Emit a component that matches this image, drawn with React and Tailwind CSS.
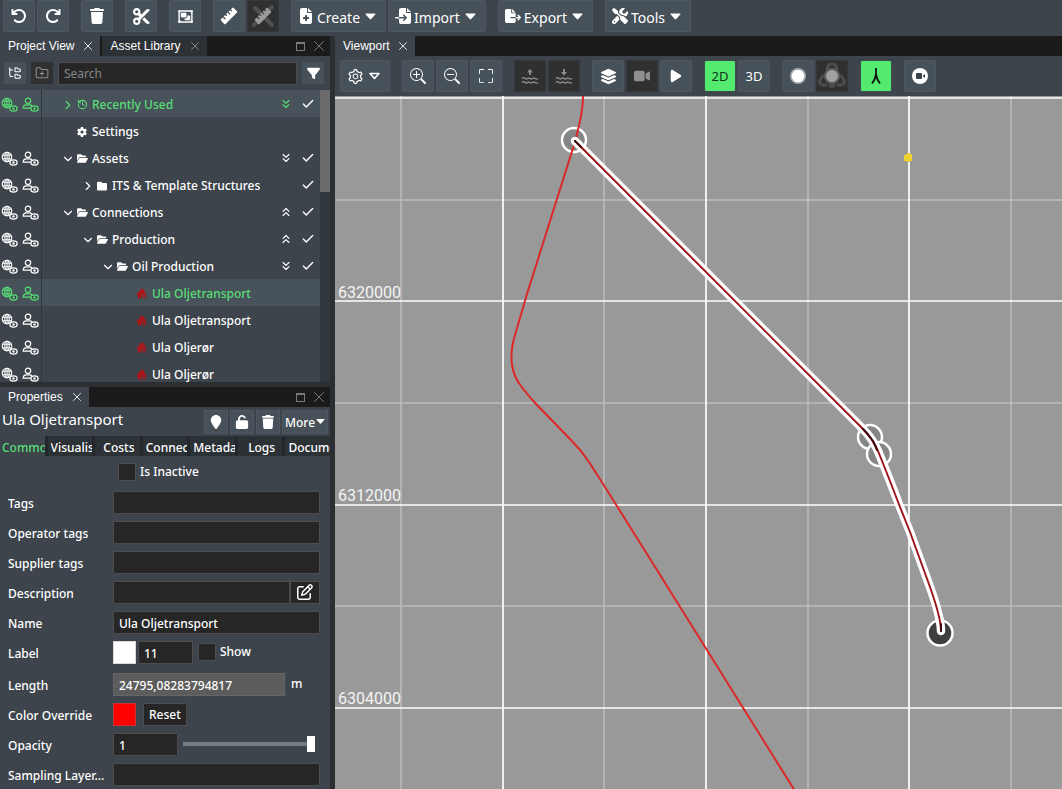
import { useState } from "react";
import clsx from "clsx";
import { Check, ChevronDown, ChevronRight, ChevronsDown, ChevronsUp, FolderTree, FolderPlus, History, X } from "lucide-react";
import {
  FaArrowRotateLeft,
  FaArrowRotateRight,
  FaFileExport,
  FaFileImport,
  FaFileMedical,
  FaFilter,
  FaFolder,
  FaFolderOpen,
  FaGear,
  FaLayerGroup,
  FaLocationPin,
  FaPlay,
  FaRegObjectGroup,
  FaRegPenToSquare,
  FaScissors,
  FaScrewdriverWrench,
  FaTrash,
  FaUnlock,
  FaVideo,
} from "react-icons/fa6";
import { AiOutlineSetting } from "react-icons/ai";
import { BsFullscreen, BsZoomIn, BsZoomOut } from "react-icons/bs";

const treeRows = [
  { label: "Recently Used", depth: 0, chevron: "right", icon: "history", expand: "down", check: true, active: true },
  { label: "Settings", depth: 0, icon: "gear", hideVisibility: true },
  { label: "Assets", depth: 0, chevron: "down", icon: "open", expand: "down", check: true },
  { label: "ITS & Template Structures", depth: 1, chevron: "right", icon: "folder", check: true },
  { label: "Connections", depth: 0, chevron: "down", icon: "open", expand: "up", check: true },
  { label: "Production", depth: 1, chevron: "down", icon: "open", expand: "up", check: true },
  { label: "Oil Production", depth: 2, chevron: "down", icon: "open", expand: "down", check: true },
  { label: "Ula Oljetransport", depth: 3, icon: "pipe", active: true },
  { label: "Ula Oljetransport", depth: 3, icon: "pipe" },
  { label: "Ula Oljerør", depth: 3, icon: "pipe" },
  { label: "Ula Oljerør", depth: 3, icon: "pipe" },
];

const depthPadding = ["pl-[18px]", "pl-[38px]", "pl-[58px]", "pl-[78px]"];

const propertyTabs = ["Common", "Visualisation", "Costs", "Connections", "Metadata", "Logs", "Documents"];

const inputClass = "h-[23px] min-w-0 rounded-[1px] border border-[#4d4d4d] bg-[#262626] px-[5px] text-white outline-none";
const fieldClass = clsx(inputClass, "pt-[2px]");

const CaretDown = ({ width = 11 }) => (
  <svg width={width} height={width} viewBox="0 0 11 11" fill="currentColor" className="shrink-0">
    <path d="M1.200 2.500h8.600q1.200 0 .5 1L6.200 8q-.7.800-1.400 0L.7 3.500q-.7-1 .5-1Z" />
  </svg>
);

const RulerIcon = () => (
  <svg width="18" height="18" viewBox="0 0 18 18" fill="currentColor">
    <path d="M1 12.2 2.8 10.4 4.9 12.5 5.8 11.6 3.7 9.5 5.2 8 6.5 9.3 7.4 8.4 6.1 7.1 7.6 5.6 9.7 7.7 10.6 6.8 8.5 4.7 10 3.2 11.3 4.5 12.2 3.6 10.9 2.3 12.3.9Q13 .3 13.7.9L17 4.2Q17.7 4.9 17 5.6L5.6 17Q4.9 17.7 4.2 17L1 13.6Q.4 12.9 1 12.2Z" />
  </svg>
);

const RulerOffIcon = () => (
  <svg width="26" height="26" viewBox="0 0 26 26">
    <path d="M5 5 22 22M22 4 4 22" stroke="#505050" strokeWidth="4" strokeLinecap="round" />
    <g transform="translate(4 4)" fill="#9b9b9b">
      <path d="M1 12.2 2.8 10.4 4.9 12.5 5.8 11.6 3.7 9.5 5.2 8 6.5 9.3 7.4 8.4 6.1 7.1 7.6 5.6 9.7 7.7 10.6 6.8 8.5 4.7 10 3.2 11.3 4.5 12.2 3.6 10.9 2.3 12.3.9Q13 .3 13.7.9L17 4.2Q17.7 4.9 17 5.6L5.6 17Q4.9 17.7 4.2 17L1 13.6Q.4 12.9 1 12.2Z" />
    </g>
  </svg>
);

const WaterIcon = ({ down }) => (
  <svg width="18" height="18" viewBox="0 0 18 18" fill="none" stroke="currentColor" strokeWidth="1.300">
    <path d={down ? "M9 2v4" : "M9 8V5"} strokeWidth="1.800" />
    <path d={down ? "M6 5h6L9 8.500Z" : "M6 5.500h6L9 2Z"} fill="currentColor" stroke="none" />
    <path d="M1 11.500c1-1.200 2-1.200 3 0 1 .8 1.500.8 2.500 0s1.500-.8 2.500 0 1.500.8 2.500 0 1.500-.8 2.500 0 2 .8 3 0M1 15.500c1-1.200 2-1.200 3 0 1 .8 1.500.8 2.500 0s1.500-.8 2.500 0 1.500.8 2.500 0 1.500-.8 2.500 0 2 .8 3 0" />
  </svg>
);

const EyeBadge = () => (
  <>
    <ellipse cx="12.500" cy="11.500" rx="3.600" ry="2.600" fill="#3d444b" strokeWidth="1.300" />
    <circle cx="12.500" cy="11.500" r="1.200" fill="currentColor" stroke="none" />
  </>
);

const GlobeEye = () => (
  <svg width="17" height="16" viewBox="0 0 17 16" fill="none" stroke="currentColor" strokeWidth="1.100">
    <circle cx="6" cy="6" r="4.800" />
    <ellipse cx="6" cy="6" rx="2.200" ry="4.800" />
    <path d="M1.500 4.300h9M1.500 7.700h9M6 1v10" />
    <EyeBadge />
  </svg>
);

const PersonEye = () => (
  <svg width="17" height="16" viewBox="0 0 17 16" fill="none" stroke="currentColor" strokeWidth="1.200">
    <circle cx="6" cy="3.800" r="2.700" />
    <path d="M9 11.200H1.200c0-2.300 1.300-3.400 3.200-3.400h3.200c1 0 1.800.3 2.300 1" />
    <EyeBadge />
  </svg>
);

const PipeIcon = () => (
  <svg width="10" height="11" viewBox="0 0 10 11" fill="#a8181d">
    <path d="M0 5.500 3 2.500V1.500l2-1 2.500 1.500V4L9 5v5.500H7.500V7L6.500 6v4.500H5V7L4 8v2.500H1V8H0Z" />
  </svg>
);

const CaretOutline = () => (
  <svg width="11" height="8" viewBox="0 0 11 8" fill="none" stroke="currentColor" strokeWidth="1.600" strokeLinejoin="round">
    <path d="M1 1.500h9L5.500 6.500Z" />
  </svg>
);

const OrbIcon = () => (
  <svg width="18" height="18" viewBox="0 0 18 18">
    <circle cx="9" cy="9" r="8" fill="#a3a9ad" />
    <circle cx="9" cy="9" r="6.300" fill="#fff" />
  </svg>
);

const OrbitIcon = () => (
  <svg width="28" height="28" viewBox="0 0 28 28">
    <g fill="none" stroke="#4c4c4c" strokeWidth="3" strokeLinejoin="round">
      <path d="M9.500 8V5.500Q10 2 14 2t4.500 3.500V8" />
      <path d="M5.500 13 2 18q-1.500 4 3 5h4M22.500 13l3.500 5q1.500 4-3 5h-4" />
      <path d="m11 22 3 3 3-3" />
    </g>
    <circle cx="14" cy="14" r="8" fill="#5c5c5c" />
    <circle cx="14" cy="14" r="6" fill="#a0a0a0" />
  </svg>
);

const LambdaIcon = () => (
  <svg width="14" height="18" viewBox="0 0 14 18" fill="none" stroke="#111" strokeWidth="1.800">
    <path d="M7 1v8M7 7.500Q6 13 3 16.500M7 7.500q1 5.500 4 9" />
  </svg>
);

const RecordIcon = () => (
  <svg width="18" height="18" viewBox="0 0 18 18">
    <circle cx="9" cy="9" r="8" fill="#fff" />
    <rect x="5" y="6" width="6" height="6" rx="1" fill="#39424a" />
    <path d="m11.500 9 2.500-2v4Z" fill="#39424a" />
  </svg>
);

const ToolButton = ({ label, variant = "normal", wide, children }) => (
  <button
    type="button"
    aria-label={label}
    disabled={variant === "disabled"}
    className={clsx(
      "flex h-8 shrink-0 items-center justify-center rounded-[2px] border",
      wide ? "pl-[6px] pr-[9px]" : "w-8",
      variant === "normal" && "border-[#4f5860] bg-[#475159] text-white",
      variant === "disabled" && "border-[#363738] bg-[#2f3031] text-[#8f8f8f]",
      variant === "active" && "border-[#414a51] bg-[#53ea6f] text-[#15331b]"
    )}
  >
    {children}
  </button>
);

const MenuButton = ({ icon: Icon, label }) => (
  <ToolButton label={label} wide>
    <Icon size={16} />
    <span className="ml-[3px] mr-[5px] pt-[2px]">{label}</span>
    <CaretDown />
  </ToolButton>
);

const ButtonGroup = ({ children }) => <div className="flex shrink-0 gap-[2px]">{children}</div>;

const PanelTab = ({ label, active }) => (
  <div
    className={clsx(
      "flex h-full items-center gap-[7px] pl-2 pr-[5px] font-['Liberation_Sans',Arial,sans-serif] text-[12px] font-normal text-white",
      active ? "bg-[#3d444b]" : "bg-[#2c3136]"
    )}
  >
    <button type="button" role="tab" aria-selected={active}>{label}</button>
    <button type="button" aria-label={`Close ${label}`} className={active ? "text-[#e5e7e9]" : "text-[#80858a]"}>
      <X size={14} strokeWidth={1.7} />
    </button>
  </div>
);

const PanelHeader = ({ children, controls }) => (
  <div className="flex h-5 shrink-0 items-center bg-[#1b1b1b]">
    <div className="flex h-full gap-[2px]" role="tablist">{children}</div>
    {controls && (
      <div className="ml-auto flex items-center gap-[5px] pr-[2px] text-[#7b7b7b]">
        <button type="button" aria-label="Maximize panel" className="h-[9px] w-[9px] border border-t-2 border-current" />
        <button type="button" aria-label="Close panel"><X size={18} strokeWidth={1.3} /></button>
      </div>
    )}
  </div>
);

const MainToolbar = () => (
  <header className="flex h-9 shrink-0 items-start gap-3 px-[3px] text-[14px]">
    <ButtonGroup>
      <ToolButton label="Undo"><FaArrowRotateLeft size={16} /></ToolButton>
      <ToolButton label="Redo"><FaArrowRotateRight size={16} /></ToolButton>
    </ButtonGroup>
    <ToolButton label="Delete"><FaTrash size={16} /></ToolButton>
    <ToolButton label="Cut"><FaScissors size={17} /></ToolButton>
    <ToolButton label="Group"><FaRegObjectGroup size={17} /></ToolButton>
    <ButtonGroup>
      <ToolButton label="Measure"><RulerIcon /></ToolButton>
      <ToolButton label="Clear measurements" variant="disabled"><RulerOffIcon /></ToolButton>
    </ButtonGroup>
    <ButtonGroup>
      <MenuButton icon={FaFileMedical} label="Create" />
      <MenuButton icon={FaFileImport} label="Import" />
    </ButtonGroup>
    <MenuButton icon={FaFileExport} label="Export" />
    <MenuButton icon={FaScrewdriverWrench} label="Tools" />
  </header>
);

const RowIcon = ({ type }) => {
  if (type === "history") return <History size={11} strokeWidth={2.2} />;
  if (type === "gear") return <FaGear size={10} />;
  if (type === "open") return <FaFolderOpen size={11} />;
  if (type === "folder") return <FaFolder size={10} />;
  return <PipeIcon />;
};

const TreeRow = ({ row }) => (
  <li
    role="treeitem"
    aria-selected={!!row.active}
    className={clsx("flex h-[27px] shrink-0 items-center", row.active ? "bg-[#48525a] text-[#57de75]" : "text-white")}
  >
    <div className="flex h-full w-[42px] shrink-0 items-center gap-1 border-r border-[#2f353a] pl-px pt-[3px]">
      {!row.hideVisibility && (
        <>
          <GlobeEye />
          <PersonEye />
        </>
      )}
    </div>
    <div className={clsx("flex min-w-0 flex-1 items-center pt-[2px]", depthPadding[row.depth])}>
      <span className="flex w-[15px] shrink-0 justify-center">
        {row.chevron === "right" && <ChevronRight size={14} />}
        {row.chevron === "down" && <ChevronDown size={14} />}
      </span>
      <span className="flex w-[17px] shrink-0 pl-[2px]"><RowIcon type={row.icon} /></span>
      <span className="truncate">{row.label}</span>
    </div>
    <span className="w-[22px] shrink-0">
      {row.expand === "down" && <ChevronsDown size={14} />}
      {row.expand === "up" && <ChevronsUp size={14} />}
    </span>
    <span className="w-[19px] shrink-0 text-white">{row.check && <Check size={14} strokeWidth={2.4} />}</span>
  </li>
);

const ProjectView = () => (
  <section className="flex h-[346px] shrink-0 flex-col bg-[#3d444b]">
    <PanelHeader controls>
      <PanelTab label="Project View" active />
      <PanelTab label="Asset Library" />
    </PanelHeader>
    <div className="flex h-[34px] shrink-0 items-center gap-[5px] pl-1 pr-[6px]">
      <button type="button" aria-label="Tree view" className="flex size-[22px] items-center justify-center bg-[#475159] text-white">
        <FolderTree size={14} strokeWidth={1.8} />
      </button>
      <button type="button" aria-label="New folder" disabled className="flex size-[22px] items-center justify-center bg-[#2f3031] text-[#8f8f8f]">
        <FolderPlus size={14} strokeWidth={1.8} />
      </button>
      <input type="search" aria-label="Search" placeholder="Search" className={clsx(inputClass, "flex-1 font-normal placeholder:text-[#858585]")} />
      <button type="button" aria-label="Filter" className="flex size-[22px] items-center justify-center bg-[#475159] text-white">
        <FaFilter size={13} />
      </button>
    </div>
    <div className="flex min-h-0 flex-1">
      <ul role="tree" className="flex min-w-0 flex-1 flex-col overflow-hidden">
        {treeRows.map((row, i) => (
          <TreeRow key={i} row={row} />
        ))}
      </ul>
      <div className="w-[10px] shrink-0 bg-[#30373d]">
        <div className="h-[102px] bg-[#6b6b6b]" />
      </div>
    </div>
  </section>
);

const Field = ({ label, id, children }) => (
  <div className="flex h-[30px] shrink-0 items-center">
    <label htmlFor={id} className="w-[113px] shrink-0 truncate pl-2 pr-[6px] pt-[3px]">{label}</label>
    {children}
  </div>
);

const Checkbox = ({ id, label }) => (
  <div className="flex items-center gap-1">
    <input id={id} type="checkbox" className="size-[18px] shrink-0 appearance-none border border-[#4d4d4d] bg-[#262626] checked:bg-[#53ea6f]" />
    <label htmlFor={id}>{label}</label>
  </div>
);

const Properties = () => {
  const [tab, setTab] = useState("Common");
  const [opacity, setOpacity] = useState("1");
  const smallButton = "flex h-6 w-6 items-center justify-center border border-[#4f5860] bg-[#475159]";

  return (
    <section className="flex min-h-0 flex-1 flex-col overflow-hidden bg-[#3d444b] text-white">
      <PanelHeader controls>
        <PanelTab label="Properties" active />
      </PanelHeader>
      <div className="flex h-[29px] shrink-0 items-center gap-[2px] pr-[2px]">
        <h2 className="flex-1 truncate pb-1 pl-[2px] text-[15px] font-normal">Ula Oljetransport</h2>
        <button type="button" aria-label="Go to" className={smallButton}><FaLocationPin size={14} /></button>
        <button type="button" aria-label="Unlock" className={smallButton}><FaUnlock size={14} /></button>
        <button type="button" aria-label="Delete item" className={smallButton}><FaTrash size={14} /></button>
        <button type="button" className="flex h-6 w-[46px] items-center justify-center gap-px border border-[#4f5860] bg-[#475159]">
          <span className="pt-[2px]">More</span>
          <CaretDown width={9} />
        </button>
      </div>
      <div role="tablist" className="grid h-5 shrink-0 grid-cols-7 gap-[3px] bg-[#23272b]">
        {propertyTabs.map((name) => (
          <button
            key={name}
            type="button"
            role="tab"
            aria-selected={tab === name}
            onClick={() => setTab(name)}
            className={clsx("min-w-0 overflow-hidden pt-[3px]", tab === name ? "bg-[#3d444b] pl-[2px] text-[#57de75]" : "bg-[#2c3136] pl-[3px]")}
          >
            <span className="block overflow-hidden whitespace-nowrap">{name}</span>
          </button>
        ))}
      </div>
      <div className="flex h-[31px] shrink-0 items-center pl-[118px]">
        <Checkbox id="inactive" label="Is Inactive" />
      </div>
      <div className="flex flex-col pr-[10px]">
        <Field label="Tags" id="tags"><input id="tags" className={clsx(fieldClass, "flex-1")} /></Field>
        <Field label="Operator tags" id="operator"><input id="operator" className={clsx(fieldClass, "flex-1")} /></Field>
        <Field label="Supplier tags" id="supplier"><input id="supplier" className={clsx(fieldClass, "flex-1")} /></Field>
        <Field label="Description" id="description">
          <input id="description" className={clsx(fieldClass, "flex-1")} />
          <button type="button" aria-label="Edit description" className="flex h-[23px] w-[30px] items-center justify-center border border-[#4d4d4d] bg-[#262626]">
            <FaRegPenToSquare size={16} />
          </button>
        </Field>
        <Field label="Name" id="name"><input id="name" defaultValue="Ula Oljetransport" className={clsx(fieldClass, "flex-1")} /></Field>
        <Field label="Label" id="label">
          <button type="button" aria-label="Label color" className="h-[23px] w-[23px] border border-[#d9d9d9] bg-white" />
          <input id="label" defaultValue="11" className={clsx(fieldClass, "ml-[2px] mr-[5px] w-[55px]")} />
          <Checkbox id="show" label="Show" />
        </Field>
        <div className="pt-[2px]">
          <Field label="Length" id="length">
            <input id="length" readOnly defaultValue="24795,08283794817" className="h-[23px] w-[172px] border border-[#666] bg-[#5c5c5c] px-[5px] pt-[2px] text-white outline-none" />
            <span className="pl-[6px]">m</span>
          </Field>
        </div>
        <Field label="Color Override" id="color">
          <button id="color" type="button" className="h-[23px] w-[23px] border border-[#c33] bg-[#ff0000]" />
          <button type="button" className="ml-[7px] h-[23px] border border-[#4d4d4d] bg-[#262626] px-[5px] pt-[2px]">Reset</button>
        </Field>
        <Field label="Opacity" id="opacity">
          <input id="opacity" value={opacity} onChange={(e) => setOpacity(e.target.value)} className={clsx(fieldClass, "w-[65px]")} />
          <input
            type="range"
            min="0"
            max="1"
            step="0.01"
            aria-label="Opacity slider"
            value={opacity}
            onChange={(e) => setOpacity(e.target.value)}
            className="ml-[5px] mr-[5px] h-4 min-w-0 flex-1 appearance-none bg-transparent [&::-webkit-slider-runnable-track]:h-1 [&::-webkit-slider-runnable-track]:bg-[#777a7d] [&::-webkit-slider-thumb]:-mt-[6px] [&::-webkit-slider-thumb]:h-4 [&::-webkit-slider-thumb]:w-2 [&::-webkit-slider-thumb]:appearance-none [&::-webkit-slider-thumb]:bg-white"
          />
        </Field>
        <Field label="Sampling Layer..." id="sampling"><input id="sampling" className={clsx(fieldClass, "flex-1")} /></Field>
      </div>
    </section>
  );
};

const ViewportToolbar = () => (
  <div className="flex h-10 shrink-0 items-center gap-3 px-[5px] text-[13px]">
    <ToolButton label="View settings" wide>
      <AiOutlineSetting size={17} className="mr-[5px]" />
      <CaretOutline />
    </ToolButton>
    <ButtonGroup>
      <ToolButton label="Zoom in"><BsZoomIn size={16} /></ToolButton>
      <ToolButton label="Zoom out"><BsZoomOut size={16} /></ToolButton>
      <ToolButton label="Fit view"><BsFullscreen size={14} /></ToolButton>
    </ButtonGroup>
    <ButtonGroup>
      <ToolButton label="Above water" variant="disabled"><WaterIcon /></ToolButton>
      <ToolButton label="Below water" variant="disabled"><WaterIcon down /></ToolButton>
    </ButtonGroup>
    <ButtonGroup>
      <ToolButton label="Layers"><FaLayerGroup size={17} /></ToolButton>
      <ToolButton label="Camera" variant="disabled"><FaVideo size={16} /></ToolButton>
      <ToolButton label="Play"><FaPlay size={14} /></ToolButton>
    </ButtonGroup>
    <ButtonGroup>
      <ToolButton label="2D" variant="active"><span className="pt-[2px]">2D</span></ToolButton>
      <ToolButton label="3D"><span className="pt-[2px]">3D</span></ToolButton>
    </ButtonGroup>
    <ButtonGroup>
      <ToolButton label="Light"><OrbIcon /></ToolButton>
      <ToolButton label="Orbit" variant="disabled"><OrbitIcon /></ToolButton>
    </ButtonGroup>
    <ToolButton label="Snap" variant="active"><LambdaIcon /></ToolButton>
    <ToolButton label="Record"><RecordIcon /></ToolButton>
  </div>
);

const minorX = [66, 269, 473, 676];
const majorX = [168, 371, 574];
const minorY = [104, 307, 510];
const majorY = [2, 205, 409, 612];
const northings = [
  { y: 202, label: "6320000" },
  { y: 405, label: "6312000" },
  { y: 608, label: "6304000" },
];

const selectedRoute = "M240 45 527 332Q538 343 543 355 552 377 565 411L575 436 595 491Q606 522 606 535";

const MapCanvas = () => (
  <svg className="block min-h-0 w-full flex-1 bg-[#999] font-normal" role="img" aria-label="Map">
    <g stroke="#bcbcbc" strokeWidth="1.500">
      {minorX.map((x) => <line key={x} x1={x} x2={x} y1="0" y2="100%" />)}
      {minorY.map((y) => <line key={y} x1="0" x2="100%" y1={y} y2={y} />)}
    </g>
    <g stroke="#fff" strokeWidth="1.700">
      {majorX.map((x) => <line key={x} x1={x} x2={x} y1="0" y2="100%" />)}
      {majorY.map((y) => <line key={y} x1="0" x2="100%" y1={y} y2={y} />)}
    </g>
    <g className="fill-[#f4f4f4] font-[Roboto,sans-serif] text-[16px]">
      {northings.map((n) => <text key={n.label} x="3" y={n.y}>{n.label}</text>)}
    </g>

    <g stroke="#fff" strokeWidth="2.500">
      <circle cx="239" cy="44" r="12" fill="#868686" />
      <circle cx="535" cy="341" r="12" fill="#868686" />
      <circle cx="544" cy="358" r="12" fill="#868686" />
      <circle cx="605" cy="537" r="12.500" fill="#3f3f3f" />
    </g>
    <path
      d="M248 0C248 18 243 35 239 49L192 198 180 239Q175 256 177 269 179 281 186 290 191 297 202 309L236 344Q246 354 254 366L270 391 297 434 460 695"
      fill="none"
      stroke="#dc2828"
      strokeWidth="2"
    />
    <g fill="none" strokeLinejoin="round" strokeLinecap="round">
      <path d={selectedRoute} stroke="#fff" strokeWidth="8.500" />
      <path d={selectedRoute} stroke="#9c1116" strokeWidth="1.900" />
      <path d="m240 45 6 6M528 333q6 6 10 12l4 9M606 528v7" stroke="#3a090b" strokeWidth="1.900" />
    </g>
    <path d="M569 59h2v-1h1v-1h3v1h2v7h-2v1h-3v-1h-3Z" fill="#ecd12f" />
  </svg>
);

const App = () => (
  <div className="flex h-screen flex-col overflow-hidden bg-[#3d444b] font-['Noto_Sans','Segoe_UI',sans-serif] text-[12px] text-white">
    <MainToolbar />
    <div className="flex min-h-0 flex-1 gap-[5px] bg-[#2c2f32]">
      <aside className="flex w-[330px] shrink-0 flex-col gap-[5px] font-medium">
        <ProjectView />
        <Properties />
      </aside>
      <main className="flex min-w-0 flex-1 flex-col bg-[#3d444b]">
        <PanelHeader>
          <PanelTab label="Viewport" active />
        </PanelHeader>
        <ViewportToolbar />
        <MapCanvas />
      </main>
    </div>
  </div>
);

export default App;
